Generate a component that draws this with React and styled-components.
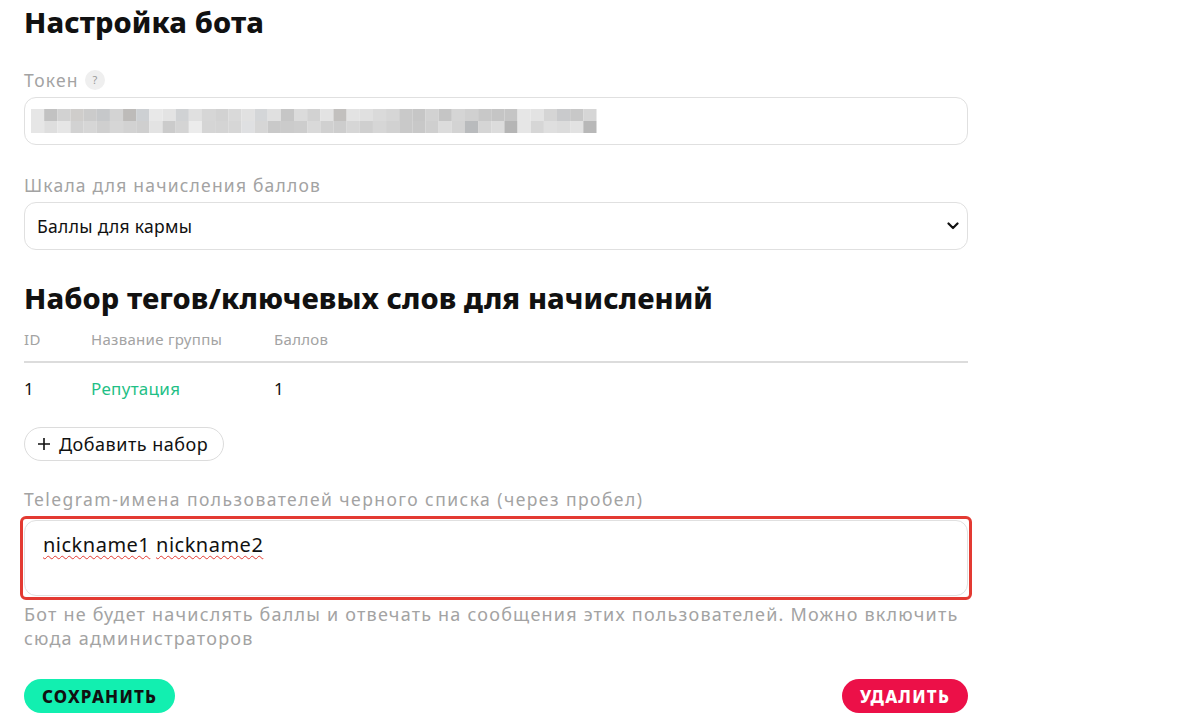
import React from "react";
import styled, { createGlobalStyle } from "styled-components";

const GlobalStyle = createGlobalStyle`
  body {
    margin: 0;
    background: #fff;
    font-family: "Noto Sans", "DejaVu Sans", sans-serif;
    color: #111;
  }
`;

const Page = styled.div`
  width: 944px;
  padding: 0 24px;
`;

const Title = styled.h1`
  font-size: 29px;
  font-weight: 800;
  line-height: 44px;
  margin: 0;
  letter-spacing: 0.1px;
`;

const SubTitle = styled(Title).attrs({ as: "h2" })`
  margin-top: 26px;
`;

const Field = styled.div`
  margin-top: ${({ $top }) => $top || 0}px;
`;

const Label = styled.div`
  display: flex;
  align-items: center;
  gap: 6px;
  color: #a3a3a3;
  font-size: 17.5px;
  line-height: 24px;
  letter-spacing: ${({ $ls }) => $ls || 1.2}px;
  margin-bottom: 5px;
`;

const Hint = styled.span`
  width: 20px;
  height: 20px;
  border-radius: 50%;
  background: #efefef;
  color: #9a9a9a;
  font-size: 11px;
  letter-spacing: 0;
  display: inline-flex;
  align-items: center;
  justify-content: center;
`;

const Box = styled.div`
  height: 46px;
  border: 1px solid #e0e0e0;
  border-radius: 12px;
  display: flex;
  align-items: center;
  padding: 0 6px 0 12px;
  font-size: 17.5px;
  letter-spacing: 0.3px;
  justify-content: space-between;
`;

const TokenBox = styled(Box)`
  padding: 0 6px;
`;

const Chevron = styled.svg`
  margin-right: 2px;
`;

const Table = styled.table`
  width: 100%;
  border-collapse: collapse;
  margin-top: 9px;
`;

const Th = styled.th`
  text-align: left;
  font-weight: 400;
  color: #a3a3a3;
  font-size: 15px;
  line-height: 20px;
  letter-spacing: 0.3px;
  padding: 0 0 12px;
  border-bottom: 2px solid #dcdcdc;
  width: ${({ $w }) => $w || "auto"};
`;

const Td = styled.td`
  font-size: 17px;
  line-height: 23px;
  padding: 14px 0 0;
  color: ${({ $accent }) => ($accent ? "#1fbf86" : "#111")};
  letter-spacing: 0.3px;
`;

const AddButton = styled.button`
  margin-top: 27px;
  height: 34px;
  padding: 0 15px 0 12px;
  border: 1px solid #dcdcdc;
  border-radius: 17px;
  background: #fff;
  font-family: inherit;
  font-size: 18px;
  letter-spacing: 0.5px;
  color: #111;
  display: flex;
  align-items: center;
  gap: 8px;
`;

const Marked = styled.div`
  border: 3px solid #e33a32;
  border-radius: 6px;
  padding: 1px;
  margin: 0 -4px;
`;

const Area = styled.div`
  height: 76px;
  border: 1px solid #e0e0e0;
  border-radius: 12px;
  padding: 10px 18px;
  box-sizing: border-box;
  font-size: 20px;
  line-height: 27px;
  letter-spacing: 0.5px;
`;

const Word = styled.span`
  text-decoration: underline wavy #e33a32;
  text-decoration-thickness: 1px;
  text-underline-offset: 3px;
`;

const Help = styled.p`
  margin: 2px 0 0;
  color: #a3a3a3;
  font-size: 18px;
  line-height: 24px;
  letter-spacing: 1.2px;
`;

const Actions = styled.div`
  display: flex;
  justify-content: space-between;
  margin-top: 29px;
`;

const Action = styled.button`
  height: 34px;
  border: none;
  border-radius: 17px;
  padding: 0 18px;
  background: ${({ $bg }) => $bg};
  color: ${({ $fg }) => $fg};
  font-family: inherit;
  font-size: 17px;
  font-weight: 800;
  letter-spacing: 1.2px;
`;

const cells = [
  ["#e6e6e6","#c2c2c2","#d2d2d2","#cfcdcb","#cbcbcb","#c6c8ca","#d3d3d3","#bdbbb9","#cdd0d3","#e8e8e8","#e3e3e3","#d0d2d4","#e0e0e0","#d6d6d6","#d2d2d2","#d9d9d9","#e1e1e1","#d4d6d8","#e0e0e0","#c6c6c6","#dbdbdb","#d2d2d2","#e3e3e3","#c2c0be","#e3e3e3","#e0e0e0","#dadada","#d6d6d6","#c9c9c9","#c6c6c6","#d2d2d2","#c5c5c5","#d5d5d5","#d0d0d0","#c8c8c8","#c5c5c5","#c5c5c5","#e6e6e6","#e3e3e3","#d5d5d5","#c9cacc","#c8c8c8","#d6d6d6"],
  ["#e6e6e6","#dedede","#e6e6e6","#d2d2d2","#d6d6d6","#cfcfcf","#d6d6d6","#d2d2d2","#cfcfcf","#e3e3e3","#cbcbcb","#d4d4d4","#ececec","#d5d5d5","#d4d4d4","#d6d6d6","#dfe0e2","#d6d6d6","#c9c9c9","#cbcbcb","#cdcdcd","#d9d9d9","#d0d0d0","#cdcdcd","#d6d6d6","#cfcfcf","#d6d6d6","#d1d1d1","#c9c9c9","#c8c8c8","#cfcfcf","#dcdcdc","#d3d3d3","#b9bbbd","#d5d5d5","#dcdcdc","#b5b5b5","#e6e6e6","#d6d6d6","#dfdfdf","#dcdcdc","#e2e2e2","#b8b8b8"],
];

function Pixels() {
  return (
    <svg width="566" height="24" viewBox="0 0 566 24">
      {cells.map((row, r) =>
        row.map((c, i) => (
          <rect key={`${r}-${i}`} x={i * 13.15} y={r * 12} width="13.2" height="12" fill={c} />
        ))
      )}
    </svg>
  );
}

export default function App() {
  return (
    <>
      <GlobalStyle />
      <Page>
        <Title>Настройка бота</Title>

        <Field $top={24}>
          <Label>
            Токен <Hint>?</Hint>
          </Label>
          <TokenBox>
            <Pixels />
          </TokenBox>
        </Field>

        <Field $top={28}>
          <Label>Шкала для начисления баллов</Label>
          <Box>
            <span>Баллы для кармы</span>
            <Chevron width="12" height="8" viewBox="0 0 12 8">
              <path d="M1.5 1.5 L6 6 L10.5 1.5" fill="none" stroke="#111" strokeWidth="2.2" strokeLinecap="round" strokeLinejoin="round" />
            </Chevron>
          </Box>
        </Field>

        <SubTitle>Набор тегов/ключевых слов для начислений</SubTitle>

        <Table>
          <thead>
            <tr>
              <Th $w="67px">ID</Th>
              <Th $w="183px">Название группы</Th>
              <Th>Баллов</Th>
            </tr>
          </thead>
          <tbody>
            <tr>
              <Td>1</Td>
              <Td $accent>Репутация</Td>
              <Td>1</Td>
            </tr>
          </tbody>
        </Table>

        <AddButton>
          <svg width="14" height="14" viewBox="0 0 14 14">
            <path d="M7 1 V13 M1 7 H13" stroke="#111" strokeWidth="1.6" />
          </svg>
          Добавить набор
        </AddButton>

        <Field $top={26}>
          <Label $ls={1.45}>Telegram-имена пользователей черного списка (через пробел)</Label>
          <Marked>
            <Area>
              <Word>nickname1</Word> <Word>nickname2</Word>
            </Area>
          </Marked>
          <Help>
            Бот не будет начислять баллы и отвечать на сообщения этих пользователей. Можно включить
            сюда администраторов
          </Help>
        </Field>

        <Actions>
          <Action $bg="#12efb0" $fg="#111">СОХРАНИТЬ</Action>
          <Action $bg="#ec1048" $fg="#fff">УДАЛИТЬ</Action>
        </Actions>
      </Page>
    </>
  );
}
